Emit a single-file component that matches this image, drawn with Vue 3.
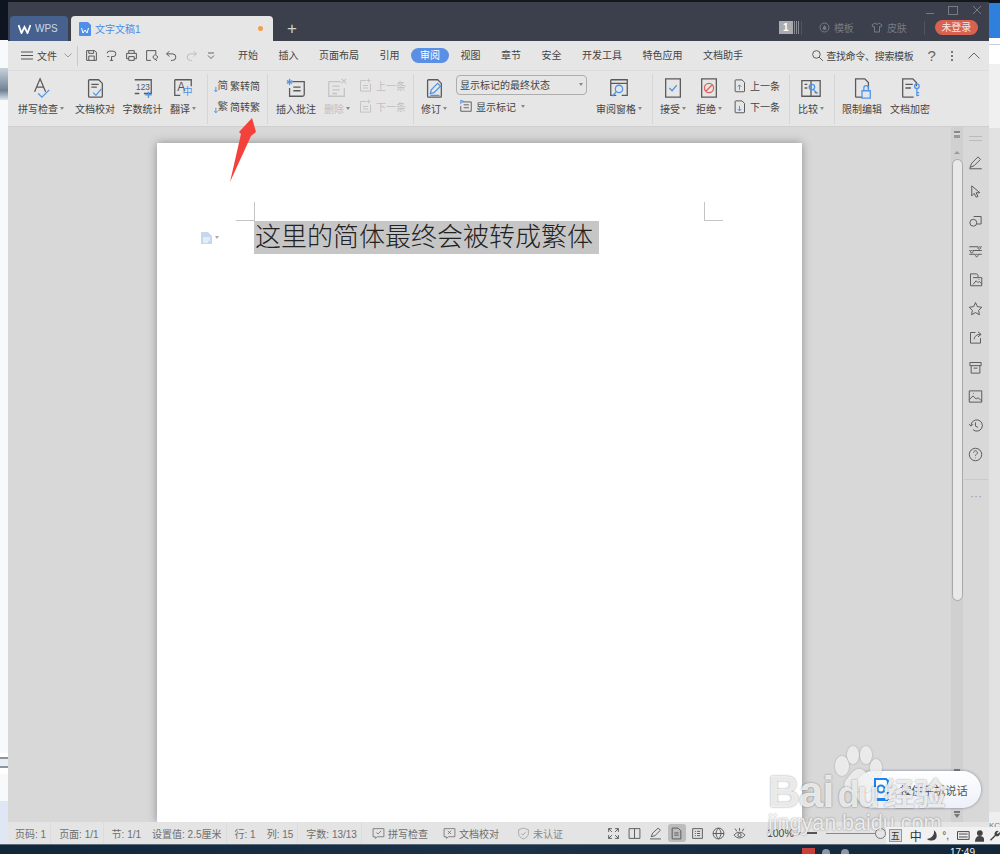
<script setup>
import { h } from 'vue';

const DARK = '#5a5a5a';
const BLUE = '#4f94ea';
const PAGE = 'M6 3h10l4 4v14a1 1 0 0 1-1 1H6a1 1 0 0 1-1-1V4a1 1 0 0 1 1-1z';

const icons = {
  spell: { d: 'M5 16 11 2l6 14M7.4 11h7.2', b: 'M9 18l4 4 8-8' },
  proof: { d: PAGE + 'M8 8h8M8 11h6', b: 'M10 17l3 3 6-7' },
  count: { d: 'M3 3h18v15H13M8 18H3z', b: 'M18 16v7M14.500 19.500h7', t: '123', tx: 12, ty: 14, ts: 9 },
  translate: { d: 'M3 3h18v7M9 20H3V3', t: 'A', tx: 10, ty: 15, ts: 13, bt: '中', btx: 17, bty: 20, bts: 11 },
  jian: { b: 'M3 14v8m-2.500-2.500L3 22l2.500-2.500', t: '简', tx: 14, ty: 17, ts: 17 },
  fan: { b: 'M3 14v8m-2.500-2.500L3 22l2.500-2.500', t: '繁', tx: 14, ty: 17, ts: 17 },
  comment: { d: 'M8 5h13v14a2 2 0 0 1-2 2H5v-9M9 11h8M9 15h8', b: 'M5 2v7M2 4l6 3M8 4 2 7' },
  remove: { d: 'M3 5h13M3 5v16h17v-9M7 10h8M7 14h8M7 18h5M17 2l5 5M22 2l-5 5' },
  prev: { d: 'M4 4h9M4 4v17h16V9M8 12h8M8 16h8M17 1v6M14 4h6' },
  next: { d: 'M4 4h9M4 4v17h16V9M8 12h8M8 16h8M17 1v6M14 4h6' },
  revise: { d: PAGE, b: 'M8 18l1-4 7-7 3 3-7 7zM8 20h10' },
  marks: { d: 'M6 5h15v16H3V12M8 10h9M8 15h9', b: 'M3 2v7M3 2l5 2-5 2' },
  pane: { d: 'M3 3h18v17h-6M9 20H3V3M3 7h18', b: 'M16 13a4 4 0 1 1-8 0 4 4 0 0 1 8 0zM9 16l-4 5' },
  accept: { d: 'M4 2h16v20H4z', b: 'M8 12l3 3 5-6' },
  reject: { d: 'M4 2h16v20H4z', r: 'M17 12a5 5 0 1 1-10 0 5 5 0 0 1 10 0zM8.500 15.500l7-7' },
  up: { d: PAGE, b: 'M12 19v-8m-3 3 3-3 3 3' },
  down: { d: PAGE, b: 'M12 11v8m-3-3 3 3 3-3' },
  compare: { d: 'M2 4h20v17H2zM12 4v17M5 8h3M5 12h3M16 17h3', b: 'M16 11a3 3 0 1 1-6 0 3 3 0 0 1 6 0zM15 14l4 4' },
  lock: { d: 'M5 22V2h10l4 4v7M5 22h7', b: 'M12 15h9v8h-9zM14 15v-3a2.500 2.500 0 0 1 5 0v3' },
  encrypt: { d: 'M4 22V2h11l4 4v4M4 22h12M7 8h8M7 12h6', b: 'M22 10a2.500 2.500 0 1 1-5 0 2.500 2.500 0 0 1 5 0zM19.500 12.500V21M19.500 17H22M19.500 20H22' },
  save: { d: 'M3 3h15l3 3v15H3zM7 3v5h9V3M7 21v-8h10v8' },
  link: { d: 'M8 4h7a5 5 0 0 1 0 10h-3v7M4 8a4 4 0 0 1 4-4M4 14h4M9 21h6' },
  print: { d: 'M7 8V3h10v5M7 18H3V8h18v10h-4M7 14h10v7H7z' },
  preview: { d: 'M20 10V3H3v18h8M15 15a4 4 0 1 0 0-.1zM18 18l4 4' },
  undo: { d: 'M8 4 3 9l5 5M3 9h11a6 6 0 0 1 0 12h-3' },
  redo: { d: 'M16 4l5 5-5 5M21 9H10a6 6 0 0 0 0 12h3' },
  search: { d: 'M17 10a7 7 0 1 1-14 0 7 7 0 0 1 14 0zM15 15l7 7' },
  pen: { d: 'M3 20 6 13 16 3l4 4-10 10zM2 22h20' },
  cursor: { d: 'M6 3v16l4-4 3 6 3-1-3-6h6z' },
  shapes: { d: 'M9 4h12v12H14M14 14a5.500 5.500 0 1 1-11 0 5.500 5.500 0 0 1 11 0z' },
  sliders: { d: 'M2 6h14M20 6h2M2 12h2M8 12h14M2 18h10M16 18h6M18 6a2 2 0 1 1-.1 0M6 12a2 2 0 1 1-.1 0M14 18a2 2 0 1 1-.1 0' },
  gallery: { d: 'M4 16V3h10l2 2v3M8 9h14v13H4v-6M8 20l5-6 3 3 2-2 4 4M17 12h1' },
  star: { d: 'M12 2.500l3 6.500 7 1-5 5 1.200 7L12 18.500 5.800 22 7 15l-5-5 7-1z' },
  share: { d: 'M12 4H4v17h16v-8M10 15c0-5 4-8 10-8M16 3l5 4-5 4' },
  box: { d: 'M3 4h18v5H3zM5 9v12h14V9M9 13h6' },
  image: { d: 'M2 3h20v18H2zM2 17l6-6 5 5 3-2 6 5M8 7h1' },
  history: { d: 'M5 12a9 9 0 1 1 3 6.700M1.500 10 5 13l3-3M12 7v6l4 2' },
  help: { d: 'M22 12a10 10 0 1 1-20 0 10 10 0 0 1 20 0zM9 9a3 3 0 1 1 4.500 2.600c-1 .6-1.500 1.200-1.500 2.400M12 17v1' },
  check: { d: 'M2 3h20v15H10l-4 3v-3H2zM8 10l3 3 6-6' },
  cross: { d: 'M2 3h20v15H10l-4 3v-3H2zM9 7l6 6M15 7l-6 6' },
  shield: { d: 'M12 2l9 3v7c0 5-4 8-9 10-5-2-9-5-9-10V5zM8 12l3 3 5-6' },
  full: { d: 'M3 9V3h6M15 3h6v6M21 15v6h-6M9 21H3v-6M3 3l6 6M21 21l-6-6M21 3l-6 6M3 21l6-6' },
  book: { d: 'M2 3h20v18H2zM12 3v18' },
  ink: { d: 'M4 18 7 11 17 2l4 4-10 10zM2 22h20' },
  pageview: { d: 'M4 2h11l5 5v15H4zM8 11h8M8 15h8' },
  outline: { d: 'M3 3h18v18H3zM7 8h2M11 8h6M7 12h2M11 12h6M7 16h2M11 16h6' },
  web: { d: 'M22 12a10 10 0 1 1-20 0 10 10 0 0 1 20 0zM2 12h20M12 2c-6 6-6 14 0 20M12 2c6 6 6 14 0 20' },
  eye: { d: 'M2 15c5-7 15-7 20 0-5 7-15 7-20 0zM15 15a3 3 0 1 1-6 0 3 3 0 0 1 6 0zM4 3l3 5M20 3l-3 5M12 2v5' },
};

// 아이콘은 24x24 기준으로 그린 뒤 size 로 맞춘다
const Icon = (props) => {
  const ic = icons[props.name];
  const font = '"Liberation Sans", "Noto Sans CJK SC", sans-serif';
  const stroke = (d, color) => d && h('path', { d, fill: 'none', stroke: color, 'stroke-width': props.sw || 1.4 });
  return h('svg', { viewBox: '0 0 24 24', width: props.size || 24, height: props.size || 24 }, [
    ic.t && h('text', { x: ic.tx, y: ic.ty, 'font-size': ic.ts, fill: '#555', 'text-anchor': 'middle', 'font-family': font }, ic.t),
    stroke(ic.d, props.color || DARK),
    stroke(ic.b, BLUE),
    stroke(ic.r, '#d9625a'),
    ic.bt && h('text', { x: ic.btx, y: ic.bty, 'font-size': ic.bts, fill: BLUE, 'text-anchor': 'middle', 'font-family': font }, ic.bt),
  ]);
};

const menus = ['开始', '插入', '页面布局', '引用', '审阅', '视图', '章节', '安全', '开发工具', '特色应用', '文档助手'];
const quick = ['save', 'link', 'print', 'preview', 'undo', 'redo'];

const ribbon = [
  { cls: 'g1', cols: [
    { icon: 'spell', label: '拼写检查', caret: true, cls: 'wide' },
    { icon: 'proof', label: '文档校对' },
    { icon: 'count', label: '字数统计' },
    { icon: 'translate', label: '翻译', caret: true },
  ] },
  { cls: 'g2', cols: [
    { stack: [{ icon: 'jian', label: '繁转简' }, { icon: 'fan', label: '简转繁' }] },
  ] },
  { cls: 'g3', cols: [
    { icon: 'comment', label: '插入批注' },
    { icon: 'remove', label: '删除', caret: true, dim: true },
    { stack: [{ icon: 'prev', label: '上一条', dim: true }, { icon: 'next', label: '下一条', dim: true }] },
  ] },
  { cls: 'g4', cols: [
    { icon: 'revise', label: '修订', caret: true },
    { select: true },
    { icon: 'pane', label: '审阅窗格', caret: true },
  ] },
  { cls: 'g5', cols: [
    { icon: 'accept', label: '接受', caret: true },
    { icon: 'reject', label: '拒绝', caret: true },
    { stack: [{ icon: 'up', label: '上一条' }, { icon: 'down', label: '下一条' }] },
  ] },
  { cls: 'g6', cols: [{ icon: 'compare', label: '比较', caret: true }] },
  { cls: 'g7', cols: [
    { icon: 'lock', label: '限制编辑' },
    { icon: 'encrypt', label: '文档加密' },
  ] },
];

const sideIcons = ['pen', 'cursor', 'shapes', 'sliders', 'gallery', 'star', 'share', 'box', 'image', 'history', 'help'];

const statusGroups = [
  ['页码: 1'],
  ['页面: 1/1'],
  ['节: 1/1', '设置值: 2.5厘米'],
  ['行: 1', '列: 15'],
  ['字数: 13/13'],
];
const viewIcons = ['full', 'book', 'ink', 'pageview', 'outline', 'web', 'eye'];
</script>

<template>
  <div class="screen">
    <div class="desk">
      <div class="strip left">
        <i class="s-black"></i><i class="s-white h28"></i><i class="s-blue"></i><i class="s-white grow"></i>
        <i class="s-lines"></i><i class="s-white h27"></i><i class="s-pale"></i>
      </div>

      <div class="window">
        <header class="title">
          <div class="tab wps">
            <svg width="13" height="10" viewBox="0 0 13 10"><path d="M.5 1 3.500 9 6.500 3l3 6L12.500 1" fill="none" stroke="#fff" stroke-width="1.800" /></svg>
            <span>WPS</span>
          </div>
          <div class="tab doc">
            <svg width="12" height="14" viewBox="0 0 12 14"><path d="M1 0h8l3 3v10a1 1 0 0 1-1 1H1a1 1 0 0 1-1-1V1a1 1 0 0 1 1-1z" fill="#4f8fea" /><path d="M2.500 6 4 11l2-3 2 3 1.500-5" fill="none" stroke="#fff" /></svg>
            <span>文字文稿1</span>
            <i class="dot"></i>
          </div>
          <span class="plus">+</span>
          <div class="title-right">
            <div class="win-btns">
              <i class="min"></i><i class="max"></i>
              <svg width="10" height="10" viewBox="0 0 10 10"><path d="M1 1l8 8M9 1 1 9" stroke="#777b86" /></svg>
            </div>
            <div class="title-tools">
              <span class="count-badge">1</span><i class="badge-lines"></i>
              <i class="t-sep first"></i>
              <span class="t-tool"><svg width="11" height="11" viewBox="0 0 11 11"><circle cx="5.500" cy="5.500" r="4.500" fill="none" stroke="#767a85" /><path d="M5.500 3l2 3a2 2 0 0 1-4 0z" fill="#767a85" /></svg>模板</span>
              <span class="t-tool"><svg width="12" height="11" viewBox="0 0 12 11"><path d="M4 1 1 3l1 2 1.500-.5V10h5V4.500L10 5l1-2-3-2-2 1.500z" fill="none" stroke="#767a85" /></svg>皮肤</span>
              <i class="t-sep"></i>
              <span class="login">未登录</span>
            </div>
          </div>
        </header>

        <nav class="menu">
          <div class="file">
            <svg width="12" height="9" viewBox="0 0 12 9"><path d="M0 1h12M0 4.500h12M0 8h12" stroke="#555" /></svg>
            <span>文件</span>
            <svg width="8" height="5" viewBox="0 0 8 5"><path d="M.5.500 4 4 7.500.500" fill="none" stroke="#999" /></svg>
          </div>
          <div class="quick">
            <Icon v-for="q in quick" :key="q" :name="q" :size="13" :sw="1.800" :color="q === 'redo' ? '#bbb' : '#555'" />
            <svg width="8" height="8" viewBox="0 0 8 8"><path d="M1 1h6M1 3.500l3 3 3-3" fill="none" stroke="#666" /></svg>
          </div>
          <ul class="menu-list">
            <li v-for="m in menus" :key="m" :class="{ active: m === '审阅' }">{{ m }}</li>
          </ul>
          <div class="menu-right">
            <span class="find"><Icon name="search" :size="13" :sw="1.800" />查找命令、搜索模板</span>
            <span class="qmark">?</span>
            <span class="vdots"><i></i><i></i><i></i></span>
            <svg width="12" height="7" viewBox="0 0 12 7"><path d="M.5 6.500 6 1l5.500 5.500" fill="none" stroke="#666" /></svg>
          </div>
        </nav>

        <section class="ribbon">
          <div v-for="g in ribbon" :key="g.cls" class="group" :class="g.cls">
            <template v-for="(c, i) in g.cols" :key="i">
              <div v-if="c.stack" class="stack">
                <div v-for="s in c.stack" :key="s.label" class="row" :class="{ dim: s.dim }">
                  <Icon :name="s.icon" :size="15" :sw="1.600" :color="s.dim ? '#c4c4c4' : undefined" />
                  <span>{{ s.label }}</span>
                </div>
              </div>
              <div v-else-if="c.select" class="select-col">
                <div class="select"><span>显示标记的最终状态</span><i class="caret"></i></div>
                <div class="row"><Icon name="marks" :size="14" :sw="1.600" /><span>显示标记</span><i class="caret"></i></div>
              </div>
              <div v-else class="big" :class="[c.cls, { dim: c.dim }]">
                <Icon :name="c.icon" :size="22" :color="c.dim ? '#c4c4c4' : undefined" />
                <span class="label">{{ c.label }}<i v-if="c.caret" class="caret"></i></span>
              </div>
            </template>
          </div>
        </section>

        <main class="body">
          <div class="canvas">
            <div class="page">
              <div class="marks"><i class="mark-l"></i><i class="mark-r"></i></div>
              <div class="line">
                <span class="para-tool">
                  <svg width="11" height="12" viewBox="0 0 11 12"><path d="M0 0h7l4 4v8H0z" fill="#c6d8f0" /><path d="M2 6h7M2 8h7M2 10h5" stroke="#fff" /></svg>
                  <i class="caret"></i>
                </span>
                <span class="selected">这里的简体最终会被转成繁体</span>
              </div>
            </div>
          </div>
          <div class="vscroll">
            <i class="top-mark"></i>
            <i class="up"></i>
            <div class="thumb"></div>
            <div class="rest">
              <i class="down-mark"></i>
              <i class="down-mark"></i>
            </div>
          </div>
          <aside class="side">
            <i class="grip"></i>
            <Icon v-for="s in sideIcons" :key="s" :name="s" :size="15" :sw="1.500" color="#555" />
            <i class="side-line"></i>
            <span class="more">···</span>
          </aside>
        </main>

        <footer class="status">
          <div v-for="(g, i) in statusGroups" :key="i" class="st-group">
            <span v-for="t in g" :key="t">{{ t }}</span>
          </div>
          <span class="st-btn first"><Icon name="check" :size="13" color="#666" />拼写检查</span>
          <span class="st-btn second"><Icon name="cross" :size="13" color="#666" />文档校对</span>
          <span class="st-btn third"><Icon name="shield" :size="13" color="#999" />未认证</span>
          <div class="views">
            <span v-for="v in viewIcons" :key="v" class="view" :class="{ on: v === 'pageview' }">
              <Icon :name="v" :size="13" :sw="1.700" color="#555" />
            </span>
          </div>
          <span class="zoom-val">100%<i class="caret"></i></span>
          <i class="zoom-minus"></i>
          <div class="zoom-track"><i class="zoom-knob"></i></div>
        </footer>
      </div>

      <div class="strip right">
        <i class="r-black"></i><i class="r-blue"></i><i class="r-white"></i><i class="r-pale"></i>
        <i class="r-gray"></i><i class="r-badge">KC</i>
      </div>
    </div>

    <div class="taskbar">
      <i class="tray-red"></i>
      <i class="tray-dot a"></i>
      <i class="tray-dot b"></i>
      <span class="clock">17:49</span>
    </div>

    <!-- 스크린샷 위에 얹힌 요소들 -->
    <svg class="arrow" width="32" height="68" viewBox="0 0 32 68">
      <path d="M23 1 27 15 22 19 1 65 12 17 10 15z" fill="#f4413c" />
    </svg>

    <div class="pill">
      <svg width="16" height="24" viewBox="0 0 16 24">
        <path d="M2 1h11l2 2v18H2zM1 22h14" fill="none" stroke="#1c86ee" stroke-width="2" />
        <circle cx="8" cy="11" r="3.500" fill="none" stroke="#1c86ee" stroke-width="2" />
      </svg>
      <span>按住手机说话</span>
    </div>

    <div class="watermark">
      <svg class="paw" width="56" height="50" viewBox="0 0 56 50">
        <ellipse cx="16" cy="20" rx="7" ry="10" />
        <ellipse cx="27" cy="9" rx="6" ry="9" />
        <ellipse cx="40" cy="9" rx="6" ry="9" />
        <ellipse cx="50" cy="22" rx="6" ry="9" />
        <path d="M33 23c6 0 9 7 13 11 4 5 0 13-7 12-4-1-8-1-12 0-7 1-11-6-7-12 4-4 7-11 13-11z" />
      </svg>
      <div class="wm-top"><span class="bai">Bai</span><span class="du">du</span><span class="jy">经验</span></div>
      <div class="wm-url">jingyan.baidu.com</div>
    </div>

    <div class="ime">
      <span class="ime-wu">五</span>
      <span class="ime-zh">中</span>
      <svg width="11" height="11" viewBox="0 0 11 11"><path d="M7 0c1 4-1 8-7 9 3 3 10 2 10-3 0-3-1-5-3-6z" fill="#444" /></svg>
      <span class="ime-punc">°,</span>
      <svg width="13" height="9" viewBox="0 0 13 9"><path d="M.5.500h12v8H.5zM2 3h9M2 6h9" fill="none" stroke="#444" /></svg>
      <svg width="10" height="12" viewBox="0 0 10 12"><circle cx="5" cy="3" r="3" fill="#444" /><path d="M0 12c0-4 2-6 5-6s5 2 5 6z" fill="#444" /></svg>
      <svg width="11" height="11" viewBox="0 0 11 11"><path d="M1 10 6 5a3 3 0 0 1 4-4L8 3l1 1 2-2a3 3 0 0 1-4 4l-5 5z" fill="#444" /></svg>
    </div>
  </div>
</template>

<style scoped>
.screen { position: relative; width: 1000px; height: 854px; display: flex; flex-direction: column; overflow: hidden; background: #13263a; font-family: "Liberation Sans", "Noto Sans CJK SC", sans-serif; font-size: 10px; color: #444; }
i { display: block; font-style: normal; }
.desk { flex: 1; display: flex; min-height: 0; }
.strip { flex: 0 0 8px; display: flex; flex-direction: column; }

.left { box-shadow: inset -2px 0 2px rgba(0, 0, 0, .2); }
.s-black { height: 40px; background: #0e1420; }
.s-white { background: #f8f9fb; }
.h28 { height: 28px; }
.h27 { height: 27px; }
.grow { flex: 1; }
.s-blue { height: 32px; background: linear-gradient(#c8d2dc, #6f8294 70%, #dde4ee); }
.s-lines { height: 21px; background: linear-gradient(#fff 0 20%, #8b96a2 20% 30%, #e8edf2 30% 60%, #8b96a2 60% 70%, #fff 70%); }
.s-pale { height: 43px; background: #dfe7f5; }

.right { box-shadow: inset 3px 0 3px rgba(0, 0, 0, .2); }
.r-black { height: 3px; background: #0e1420; }
.r-blue { height: 35px; background: #2f80dc; }
.r-white { height: 26px; background: linear-gradient(#fff 0 22%, #ccd 22% 26%, #fff 26%); }
.r-pale { height: 64px; background: #f0f0f0; }
.r-gray { flex: 1; background: #e2e2e2; }
.r-badge { height: 32px; padding-top: 8px; box-sizing: border-box; background: #eee; font-size: 8px; color: #777; line-height: 11px; white-space: nowrap; overflow: hidden; }

.window { flex: 1; min-width: 0; display: flex; flex-direction: column; border-top: 2px solid #15171c; }

/* 제목 표시줄 */
.title { height: 39px; flex: none; background: #3c404c; display: flex; align-items: flex-end; padding-left: 2px; }
.tab { height: 25px; display: flex; align-items: center; border-radius: 4px 4px 0 0; box-sizing: border-box; }
.wps { width: 58px; background: #46618e; color: #cfd6e2; padding-left: 8px; gap: 4px; margin-right: 3px; }
.doc { width: 202px; background: #e6e6e6; color: #4d8ae6; padding: 0 10px 0 8px; gap: 4px; }
.doc .dot { width: 5px; height: 5px; border-radius: 50%; background: #f0a04a; margin-left: auto; }
.plus { align-self: flex-end; height: 25px; line-height: 25px; margin-left: 14px; color: #d0d2d6; font-size: 17px; }
.title-right { margin-left: auto; align-self: stretch; display: flex; flex-direction: column; align-items: flex-end; }
.win-btns { height: 16px; display: flex; align-items: center; gap: 14px; padding-right: 7px; }
.win-btns .min { width: 8px; height: 1px; background: #777b86; margin-top: 6px; }
.win-btns .max { width: 8px; height: 7px; border: 1px solid #777b86; }
.title-tools { display: flex; align-items: center; height: 19px; padding-right: 11px; color: #767a85; }
.count-badge { width: 14px; height: 13px; line-height: 13px; text-align: center; background: #a9abb0; color: #fff; font-weight: 700; }
.badge-lines { width: 5px; height: 13px; margin-left: 1px; background: repeating-linear-gradient(90deg, #888b93 0 1px, transparent 1px 2px); }
.t-sep { width: 1px; height: 14px; background: #50545f; margin: 0 10px; }
.t-sep.first { margin: 0 17px 0 2px; }
.t-tool { display: flex; align-items: center; gap: 4px; margin-right: 17px; }
.t-tool + .t-sep { margin-left: 0; }
.login { width: 43px; height: 15px; line-height: 15px; text-align: center; border-radius: 8px; background: #d9614f; color: #fbe6e2; }

/* 메뉴 */
.menu { height: 30px; flex: none; background: #e6e6e6; border-bottom: 1px solid #dcdcdc; box-sizing: border-box; display: flex; align-items: center; padding-left: 13px; }
.file { display: flex; align-items: center; gap: 4px; width: 57px; height: 20px; border-right: 1px solid #c9c9c9; box-sizing: border-box; }
.file span { margin-right: 3px; }
.quick { display: flex; align-items: center; gap: 7px; margin-left: 7px; width: 147px; }
.quick svg:last-child { margin-left: 2px; }
.menu-list { list-style: none; display: flex; align-items: center; gap: 2.500px; margin: 0 0 0 -3px; padding: 0; }
.menu-list li { padding: 0 9px; height: 15px; line-height: 15px; white-space: nowrap; }
.menu-list li.active { background: #5a8fe6; color: #fff; border-radius: 8px; }
.menu-right { margin-left: auto; display: flex; align-items: center; padding-right: 9px; }
.find { display: flex; align-items: center; gap: 2px; letter-spacing: -.3px; }
.qmark { font-size: 15px; color: #666; margin-left: 14px; }
.vdots { margin: 0 15px 0 15px; display: flex; flex-direction: column; gap: 2px; }
.vdots i { width: 2px; height: 2px; background: #777; }

/* 리본 */
.ribbon { height: 56px; flex: none; background: #e6e6e6; border-bottom: 1px solid #cfcfcf; box-sizing: border-box; display: flex; align-items: center; }
.group { height: 50px; display: flex; box-sizing: border-box; border-right: 1px solid #d6d6d6; }
.g1 { width: 200px; padding-left: 10px; gap: 7.500px; }
.g2 { width: 60px; padding-left: 6px; }
.g2 .row { gap: 1px; }
.g3 { width: 146px; padding-left: 8px; gap: 8px; }
.g4 { width: 239px; padding-left: 7px; gap: 9px; }
.g5 { width: 137px; padding-left: 7px; gap: 10px; }
.g6 { width: 45px; padding-left: 8px; }
.g7 { border-right: 0; padding-left: 7px; gap: 8px; }
.big { display: flex; flex-direction: column; align-items: center; padding-top: 3px; white-space: nowrap; }
.big.wide { margin-right: 3.500px; }
.label { display: flex; align-items: center; height: 14px; margin-top: 3px; gap: 2px; }
.caret { width: 0; height: 0; border: 2px solid transparent; border-top: 3px solid #888; border-bottom: 0; flex: none; }
.dim { color: #c0c0c0; }
.stack { display: flex; flex-direction: column; padding-top: 1px; }
.row { display: flex; align-items: center; gap: 3px; height: 21px; white-space: nowrap; }
.select-col { display: flex; flex-direction: column; width: 131px; padding-top: 1px; }
.select { height: 20px; box-sizing: border-box; border: 1px solid #adadad; border-radius: 4px; display: flex; align-items: center; justify-content: space-between; padding: 0 3px; margin-bottom: 1px; }
.select-col .row { padding-left: 3px; }
.select-col .row .caret { margin-left: 2px; }

/* 본문 */
.body { flex: 1; min-height: 0; display: flex; background: #d8d8d8; }
.canvas { width: 943px; flex: none; padding-top: 16px; box-sizing: border-box; display: flex; justify-content: center; overflow: hidden; }
.page { width: 645px; background: #fff; box-shadow: 0 0 9px rgba(0, 0, 0, .35); padding-top: 59px; box-sizing: border-box; }
.marks { display: flex; justify-content: space-between; padding: 0 79px; }
.marks i { width: 19px; height: 19px; box-sizing: border-box; border-bottom: 1px solid #c4c4c4; }
.mark-l { border-right: 1px solid #c4c4c4; }
.mark-r { border-left: 1px solid #c4c4c4; }
.line { display: flex; align-items: center; padding-left: 44px; }
.para-tool { display: flex; align-items: center; gap: 3px; width: 53px; }
.para-tool .caret { border-top-color: #aaa; }
.selected { background: #c6c6c6; color: #222; font-size: 26px; line-height: 33px; height: 33px; padding-right: 6px; padding-left: 1px; font-weight: 300; white-space: nowrap; }

.vscroll { width: 12px; flex: none; background: #d0d0d0; display: flex; flex-direction: column; align-items: center; }
.top-mark { width: 6px; height: 7px; margin-top: 4px; background: linear-gradient(#888 0 2px, transparent 2px 4px, #999 4px); background-color: #d8d8d8; }
.up { width: 0; height: 0; margin: 13px 0 5px; border: 3px solid transparent; border-bottom: 3px solid #999; border-top: 0; }
.thumb { width: 11px; height: 442px; box-sizing: border-box; background: #e9e9e9; border: 1px solid #a8a8a8; border-radius: 6px; }
.rest { flex: 1; display: flex; flex-direction: column; justify-content: flex-end; gap: 35px; padding-bottom: 4px; }
.down-mark { width: 6px; height: 7px; background: linear-gradient(#777 0 2px, transparent 2px); position: relative; }
.down-mark::after { content: ""; position: absolute; left: 0; top: 3px; border: 3px solid transparent; border-top: 4px solid #777; border-bottom: 0; }
.side { flex: 1; display: flex; flex-direction: column; align-items: center; gap: 14.200px; }
.grip { width: 13px; height: 3px; margin: 9px 0 0; border-top: 1px solid #bbb; border-bottom: 1px solid #bbb; }
.side-line { width: 24px; height: 1px; background: #cacaca; margin-top: 3px; }
.more { color: #999; font-size: 12px; line-height: 10px; margin-top: -3px; letter-spacing: 0; }

/* 상태 표시줄 */
.status { height: 22px; flex: none; background: #e4e4e4; display: flex; align-items: center; padding-left: 7px; color: #6e6e6e; white-space: nowrap; }
.st-group { display: flex; gap: 11px; height: 100%; align-items: center; padding-right: 4px; margin-right: 8px; border-right: 1px solid #dcdcdc; }
.st-btn { display: flex; align-items: center; gap: 3px; }
.st-btn.first { margin-left: 2px; }
.st-btn.second { margin-left: 15px; }
.st-btn.third { margin-left: 18px; color: #888; }
.views { display: flex; align-items: center; gap: 3px; margin-left: 42px; }
.view { width: 18px; height: 18px; display: flex; align-items: center; justify-content: center; border-radius: 3px; }
.view.on { background: #bcbcbc; }
.zoom-val { display: flex; align-items: center; gap: 3px; margin-left: 18px; color: #444; font-size: 10.500px; }
.zoom-minus { width: 10px; height: 2px; background: #555; margin-left: 6px; }
.zoom-track { position: relative; width: 55px; height: 1px; background: #888; margin-left: 9px; }
.zoom-knob { position: absolute; right: -5px; top: -5px; width: 9px; height: 9px; border: 1px solid #777; border-radius: 50%; background: #e4e4e4; }

.taskbar { height: 10px; flex: none; background: linear-gradient(90deg, #12263a, #1c3247 50%, #13263a); box-shadow: inset 0 1px 0 #5a6a78; position: relative; overflow: hidden; display: flex; justify-content: flex-end; }
.tray-red { width: 13px; height: 6px; background: #c8423a; position: absolute; left: 802px; top: 4px; }
.tray-dot { width: 8px; height: 6px; border-radius: 4px 4px 0 0; background: #8c98a4; position: absolute; top: 5px; }
.tray-dot.a { left: 822px; }
.tray-dot.b { left: 841px; }
.clock { color: #eef2f6; font-size: 10px; line-height: 12px; margin: 3px 25px 0 0; }

/* 겹치는 요소 */
.arrow { position: absolute; left: 229px; top: 117px; }
.pill { position: absolute; left: 855px; top: 771px; width: 126px; height: 37px; box-sizing: border-box; padding-left: 18px; border-radius: 19px; background: linear-gradient(#fff, #edf0f8); box-shadow: 0 0 3px rgba(80, 90, 130, .7); display: flex; align-items: center; gap: 11px; font-size: 11.300px; color: #555; }
.watermark { position: absolute; left: 766px; top: 746px; width: 190px; height: 92px; color: rgba(255, 255, 255, .82); text-shadow: 0 0 2px rgba(0, 0, 0, .45); pointer-events: none; }
.paw { position: absolute; left: 60px; top: 0; fill: rgba(255, 255, 255, .75); filter: drop-shadow(0 0 1px rgba(0, 0, 0, .3)); }
.wm-top { position: absolute; left: 2px; top: 24px; display: flex; align-items: baseline; font-weight: 700; white-space: nowrap; line-height: 1; }
.bai { font-size: 44px; letter-spacing: -1px; }
.du { font-size: 36px; letter-spacing: -2px; margin-left: 4px; }
.jy { font-size: 31px; margin-left: 6px; position: relative; top: -2px; }
.wm-url { position: absolute; left: 2px; top: 64px; font-size: 21.500px; line-height: 26px; white-space: nowrap; }
.ime { position: absolute; left: 886px; top: 827px; width: 114px; height: 17px; background: #f1f1f1; display: flex; align-items: center; gap: 5px; padding-left: 3px; box-sizing: border-box; overflow: hidden; }
.ime-wu { width: 13px; height: 13px; line-height: 12px; box-sizing: border-box; text-align: center; border: 1px solid #e0796e; background: #ddd; color: #333; font-size: 9px; margin-right: 3px; }
.ime-zh { font-size: 12px; color: #333; }
.ime-punc { font-size: 10px; color: #444; width: 10px; }
</style>

<style>
html, body { margin: 0; overflow: hidden; }
</style>
